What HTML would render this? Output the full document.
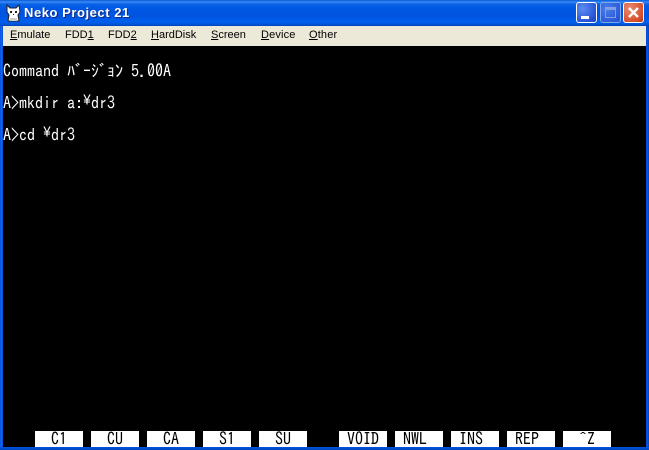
<!DOCTYPE html>
<html><head><meta charset="utf-8"><style>
html,body{margin:0;padding:0;background:#000}
#w{position:relative;width:649px;height:450px;overflow:hidden;background:#000;font-family:"Liberation Sans",sans-serif}
#t{position:absolute;left:0;top:0;width:649px;height:26px;background:linear-gradient(180deg,#0a58d8 0,#3a8cf5 2px,#0a62e6 4px,#0058e4 8px,#0054e0 16px,#0060ee 22px,#0050d0 25px,#0040b0 26px)}
#tt{position:absolute;left:24px;top:5px;font:bold 13px/16px "Liberation Sans",sans-serif;color:#fff;letter-spacing:.55px;text-shadow:1px 1px 0 #0a2a90}
#m{position:absolute;left:3px;top:26px;width:643px;height:20px;background:#ece9d8}
.mi{position:absolute;top:28px;font:11px/14px "Liberation Sans",sans-serif;color:#000}
.mi u{text-underline-offset:1px}
.l{position:absolute;left:0;width:3px;background:linear-gradient(90deg,#0050e0,#1a68f0 50%,#0048d0)}
.r{position:absolute;left:646px;width:3px;background:linear-gradient(90deg,#0048d0,#0a58e0 50%,#0040b8)}
#b{position:absolute;left:0;top:447px;width:649px;height:3px;background:linear-gradient(180deg,#0050e0,#0050d8 50%,#0040b0)}
.x{position:absolute;font:16px/16px "IPAGothic","Noto Sans CJK JP",monospace;color:#fff;white-space:pre;transform:scaleY(1.08);transform-origin:0 14px}
.y{display:inline-block;width:8px;font:13.33px/16px "Liberation Mono",monospace;vertical-align:top}
.k{position:absolute;top:431px;width:48px;height:16px;background:#fff;color:#000;font:16px/16px "IPAGothic","Noto Sans CJK JP",monospace;white-space:pre;overflow:hidden}
.k span{display:block;transform:scaleY(1.08);transform-origin:0 14px}
.bt{position:absolute;top:2px;width:21px;height:21px;border:1px solid #fff;border-radius:3px;box-sizing:border-box}
</style></head><body><div id="w">
<div id="t"></div>
<svg style="position:absolute;left:5px;top:4px" width="17" height="18" viewBox="0 0 17 18"><path d="M2 1l3 3h6l3-3 1 7-2 3 1 6H3l1-6-2-3z" fill="#fff" stroke="#222" stroke-width="1"/><path d="M5 7h2v2H5zM10 7h2v2h-2zM8 10h1v1H8z" fill="#222"/><path d="M5 14h7v3H5z" fill="#ccc"/></svg>
<div id="tt">Neko Project 21</div>
<div class="bt" style="left:576px;background:radial-gradient(circle at 30% 30%,#5c8cf0,#2a55d8 70%,#1c40b8)"><div style="position:absolute;left:4px;top:13px;width:8px;height:3px;background:#fff"></div></div>
<div class="bt" style="left:600px;border-color:#7fa8f0;background:radial-gradient(circle at 30% 30%,#4a7ce8,#2c5cd8 70%,#2450c8)"><div style="position:absolute;left:4px;top:4px;width:11px;height:11px;border:1px solid #7fa0e8;border-top-width:3px;box-sizing:border-box"></div></div>
<div class="bt" style="left:623px;background:radial-gradient(circle at 30% 30%,#e88a70,#d8502c 70%,#b83818)"><svg style="position:absolute;left:3px;top:3px" width="13" height="13" viewBox="0 0 13 13"><path d="M2 2l9 9M11 2l-9 9" stroke="#fff" stroke-width="2.4" fill="none"/></svg></div>
<div id="m"></div>
<div class="mi" style="left:10px"><u>E</u>mulate</div>
<div class="mi" style="left:65px">FDD<u>1</u></div>
<div class="mi" style="left:108px">FDD<u>2</u></div>
<div class="mi" style="left:151px"><u>H</u>ardDisk</div>
<div class="mi" style="left:211px"><u>S</u>creen</div>
<div class="mi" style="left:261px;letter-spacing:.15px"><u>D</u>evice</div>
<div class="mi" style="left:309px;letter-spacing:.15px"><u>O</u>ther</div>
<div class="l" style="top:26px;height:424px"></div>
<div class="r" style="top:26px;height:424px"></div>
<div id="b"></div>
<div class="x" style="left:3px;top:63px">Command ﾊﾞｰｼﾞｮﾝ 5.00A</div>
<div class="x" style="left:3px;top:95px">A&gt;mkdir a:<span class="y">¥</span>dr3</div>
<div class="x" style="left:3px;top:127px">A&gt;cd <span class="y">¥</span>dr3</div>
<div class="k" style="left:35px"><span>  C1</span></div>
<div class="k" style="left:91px"><span>  CU</span></div>
<div class="k" style="left:147px"><span>  CA</span></div>
<div class="k" style="left:203px"><span>  S1</span></div>
<div class="k" style="left:259px"><span>  SU</span></div>
<div class="k" style="left:339px"><span> VOID</span></div>
<div class="k" style="left:395px"><span> NWL</span></div>
<div class="k" style="left:451px"><span> INS</span></div>
<div class="k" style="left:507px"><span> REP</span></div>
<div class="k" style="left:563px"><span>  ^Z</span></div>
</div></body></html>
